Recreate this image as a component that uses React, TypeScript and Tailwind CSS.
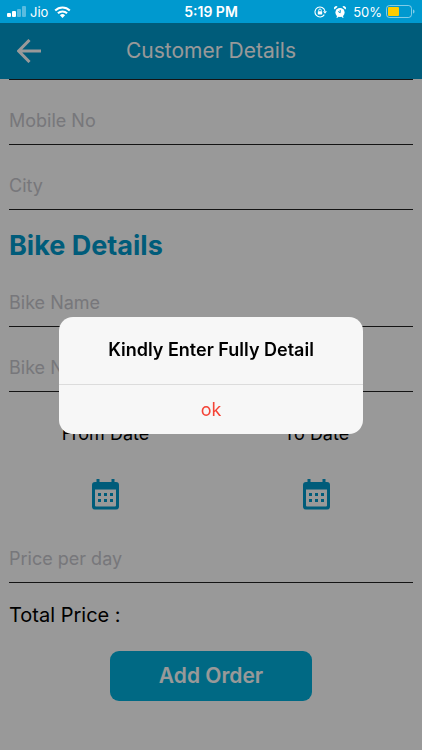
import React from "react";

function StatusBar() {
  return (
    <div className="relative z-20 grid h-[23px] grid-cols-[1fr_auto_1fr] items-center bg-[#0099cf] px-[7px] text-[13px] leading-4 text-white">
      <div className="flex items-center gap-1">
        <svg width="19" height="12" viewBox="0 0 19 12" fill="currentColor" aria-hidden="true">
          <rect x="0" y="7" width="4" height="4" rx="1" />
          <rect x="5" y="5" width="4" height="6" rx="1" />
          <rect x="10" y="3" width="4" height="8" rx="1" opacity=".35" />
          <rect x="15" y="0" width="4" height="11" rx="1" opacity=".35" />
        </svg>
        <span>Jio</span>
        <svg className="ml-[2px]" width="17" height="12" viewBox="0 0 17 12" fill="none" stroke="currentColor" aria-hidden="true">
          <path d="M1.2 4.6a10.3 10.3 0 0 1 14.6 0" strokeWidth="2.1" />
          <path d="M3.9 7.3a6.5 6.5 0 0 1 9.2 0" strokeWidth="2" />
          <path d="M8.5 11.9 5.9 9.3a3.7 3.7 0 0 1 5.2 0z" fill="currentColor" stroke="none" />
        </svg>
      </div>
      <span className="text-[14px] font-semibold">5:19 PM</span>
      <div className="flex items-center justify-end">
        <svg width="13" height="12" viewBox="0 0 13 12" fill="none" stroke="currentColor" aria-hidden="true">
          <path d="M10.3 8.6A5 5 0 1 1 10.9 5" strokeWidth="1.1" />
          <path d="M9 5.2h4L11 7.8z" fill="currentColor" stroke="none" />
          <rect x="3.8" y="5.3" width="4.4" height="3.2" rx=".4" fill="currentColor" stroke="none" />
          <path d="M4.7 5.4V4.3a1.3 1.3 0 0 1 2.6 0v1.1" strokeWidth=".9" />
        </svg>
        <svg className="ml-[7px]" width="12" height="12" viewBox="0 0 12 12" fill="currentColor" aria-hidden="true">
          <circle cx="6" cy="6.5" r="4.6" />
          <path d="M.6 3.5A2 2 0 0 1 3.6.8zM11.4 3.5A2 2 0 0 0 8.4.8zM2.2 11.6l1.5-2 1 .8-1.200 1.400zM9.8 11.6l-1.500-2-1 .8 1.200 1.400z" />
          <path d="M6.200 3.800v3L4.200 5.500" fill="none" stroke="#0099cf" strokeWidth="1" />
        </svg>
        <span className="ml-[7px]">50%</span>
        <svg className="ml-1" width="29" height="13" viewBox="0 0 29 13" aria-hidden="true">
          <rect x=".5" y=".5" width="25" height="12" rx="3" fill="none" stroke="#fff" strokeOpacity=".5" />
          <rect x="2" y="2" width="11" height="9" rx="1" fill="#ffcc00" />
          <path d="M27 4.500c2 .6 2 3.400 0 4z" fill="#fff" fillOpacity=".5" />
        </svg>
      </div>
    </div>
  );
}

function Field({ name }: { name: string }) {
  return (
    <input
      type="text"
      aria-label={name}
      placeholder={name}
      className="block h-[65px] w-full border-b border-[#222] bg-transparent pt-4 text-[18px] leading-6 text-black outline-none placeholder:text-[#c7c7cd]"
    />
  );
}

function DatePicker({ label }: { label: string }) {
  return (
    <div className="flex flex-col items-center gap-[33px]">
      <span className="text-[18px] leading-6">{label}</span>
      <button type="button" aria-label={label} className="text-[#0099cc]">
        <svg width="27" height="31" viewBox="0 0 27 31" aria-hidden="true">
          <path
            fill="currentColor"
            fillRule="evenodd"
            d="M4.500 0h3v3h12V0h3v3H24a3 3 0 0 1 3 3v21.500a3 3 0 0 1-3 3H3a3 3 0 0 1-3-3V6a3 3 0 0 1 3-3h1.500zM3 10.500V26.500a1 1 0 0 0 1 1h19a1 1 0 0 0 1-1V10.500z"
          />
          <path
            fill="currentColor"
            d="M6 14h3v3H6zM12 14h3v3h-3zM18 14h3v3h-3zM6 20h3v3H6zM12 20h3v3h-3zM18 20h3v3h-3z"
          />
        </svg>
      </button>
    </div>
  );
}

export default function App() {
  return (
    <div className="min-h-screen bg-white font-['Inter','Liberation_Sans',sans-serif] text-black">
      <StatusBar />
      <header className="grid h-14 grid-cols-[1fr_auto_1fr] items-center bg-[#0099cc] px-[17px]">
        <button type="button" aria-label="Back" className="w-6 text-white">
          <svg width="24" height="24" viewBox="0 0 24 24" fill="none" stroke="currentColor" strokeWidth="3" aria-hidden="true">
            <path d="M24 12H2M12.500 1 1.700 12l10.800 11" />
          </svg>
        </button>
        <h1 className="text-[21px] leading-7 text-white">Customer Details</h1>
      </header>
      <main>
        <form onSubmit={(e) => e.preventDefault()}>
          <div className="px-[9px]">
            <div className="border-t border-[#222]" />
            <Field name="Mobile No" />
            <Field name="City" />
            <h2 className="pt-[22px] pb-[2px] text-[27px] leading-7 font-bold text-[#0099cc]">Bike Details</h2>
            <Field name="Bike Name" />
            <Field name="Bike Number" />
          </div>
          <div className="grid h-[126px] grid-cols-2 pt-[30px]">
            <DatePicker label="From Date" />
            <DatePicker label="To Date" />
          </div>
          <div className="px-[9px]">
            <Field name="Price per day" />
            <p className="pt-[18px] text-[20px] leading-7">Total Price :</p>
          </div>
          <button
            type="submit"
            className="mx-auto mt-[22px] block h-[50px] w-[202px] rounded-[9px] bg-[#00b0dc] text-[21px] font-semibold text-white"
          >
            Add Order
          </button>
        </form>
      </main>
      <div className="fixed inset-0 z-10 flex items-center justify-center bg-black/40">
        <div
          role="alertdialog"
          aria-modal="true"
          aria-labelledby="alert-title"
          className="w-[304px] overflow-hidden rounded-[14px] bg-[#f7f7f7] text-center"
        >
          <h2 id="alert-title" className="flex h-[67px] items-center justify-center text-[18px] leading-6 font-semibold">
            Kindly Enter Fully Detail
          </h2>
          <button type="button" className="block h-[50px] w-full border-t border-[#dcdcdc] text-[18px] text-[#f44336]">
            ok
          </button>
        </div>
      </div>
    </div>
  );
}
